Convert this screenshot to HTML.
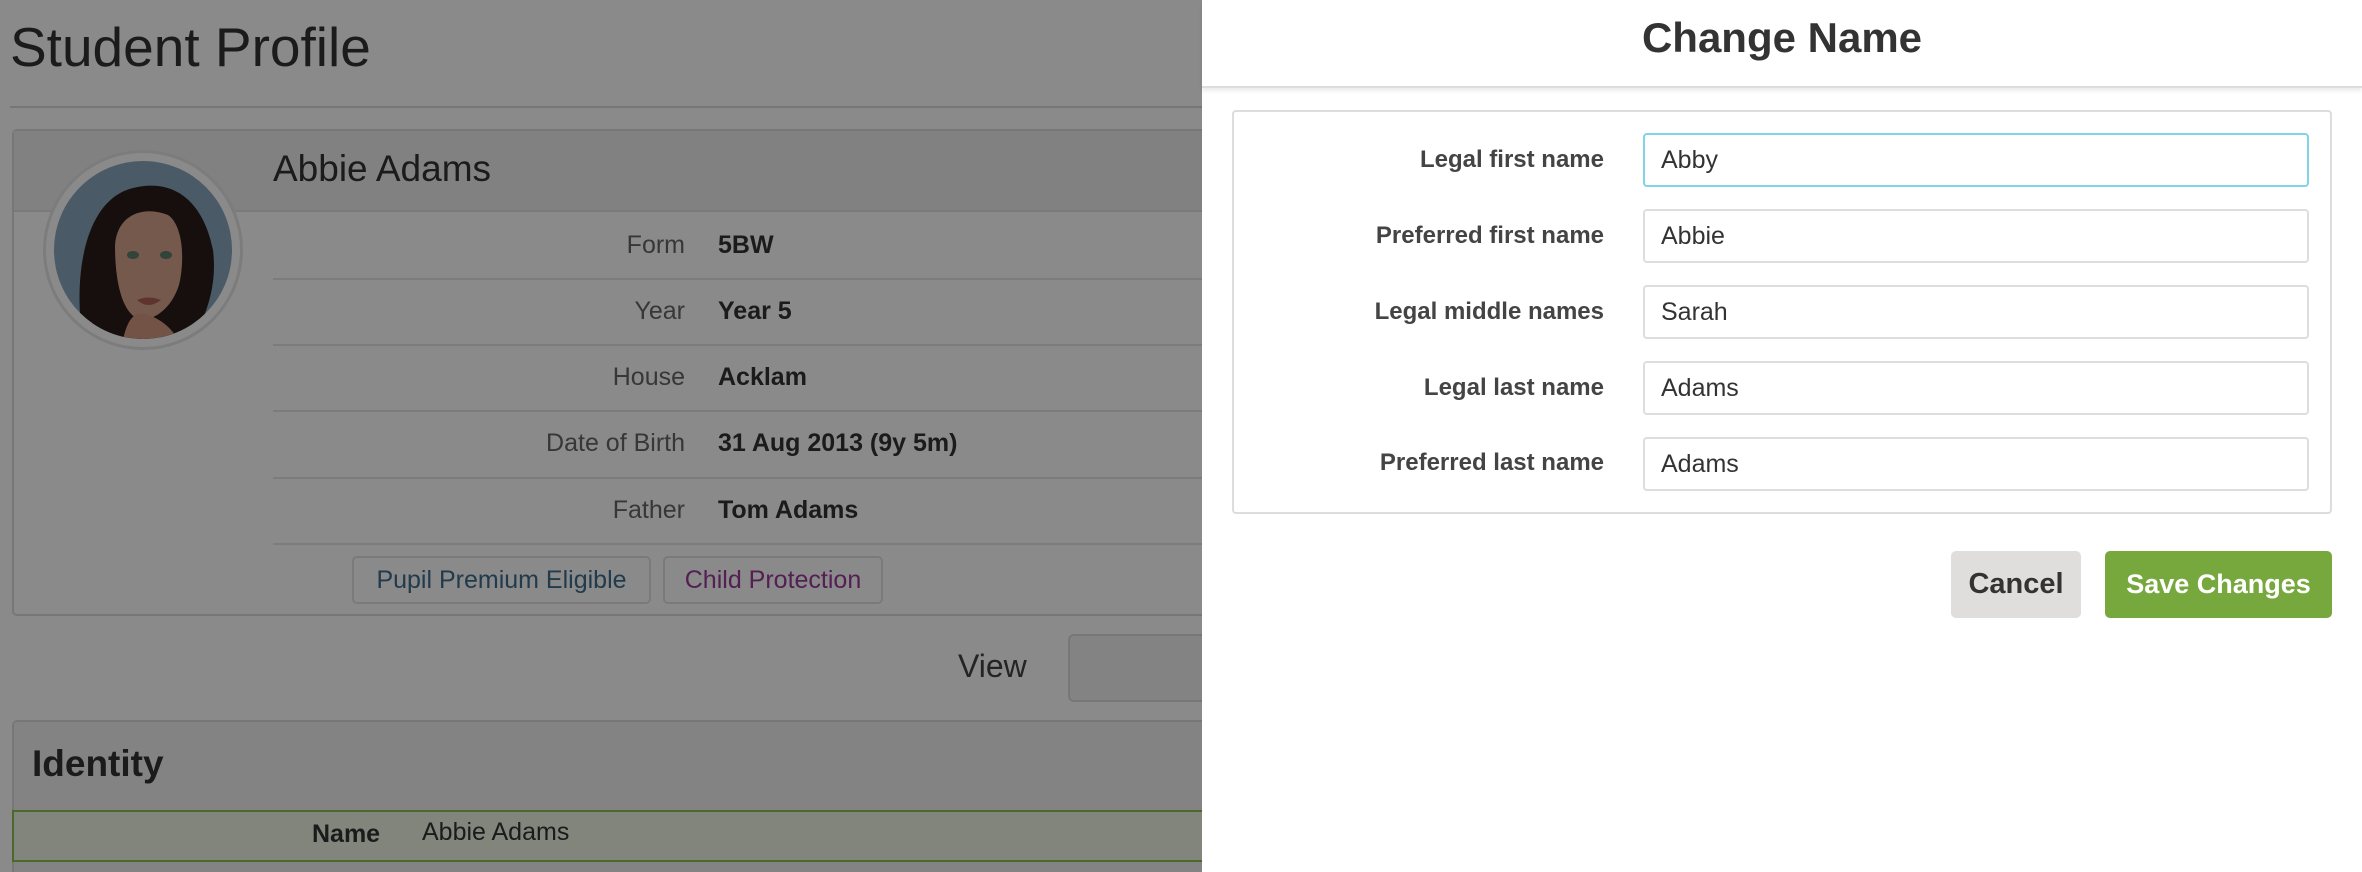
<!DOCTYPE html>
<html style="overflow:hidden"><head><meta charset="utf-8"><style>
*{box-sizing:border-box;margin:0;padding:0}
html,body{width:2362px;height:872px;overflow:hidden}
body{position:relative;background:#fff;font-family:"Liberation Sans",sans-serif;color:#333}
.a{position:absolute}
.lbl{position:absolute;right:1677px;font-size:25px;color:#666;text-align:right;white-space:nowrap}
.val{position:absolute;left:718px;font-size:25px;font-weight:bold;color:#333;white-space:nowrap}
.sep{position:absolute;left:273px;width:929px;height:2px;background:#e6e6e6}
.ov{position:absolute;left:0;top:0;width:1202px;height:872px;background:rgba(0,0,0,0.46)}
.fl{position:absolute;right:758px;font-size:24px;font-weight:bold;color:#444;text-align:right;white-space:nowrap}
.in{position:absolute;left:1643px;width:666px;height:54px;border:2px solid #ddd;border-radius:4px;font-size:25px;color:#333;padding-left:16px;line-height:50px}
</style></head><body>
<div class="a" style="left:10px;top:15px;font-size:55px;color:#333">Student Profile</div>
<div class="a" style="left:10px;top:106px;width:1192px;height:2px;background:#ddd"></div>
<div class="a" style="left:12px;top:129px;width:1190px;height:487px;border:2px solid #ddd;border-right:none;border-radius:5px 0 0 5px"></div>
<div class="a" style="left:14px;top:131px;width:1188px;height:81px;background:#eee;border-bottom:2px solid #e2e2e2"></div>
<div class="a" style="left:273px;top:148px;font-size:37px;color:#333">Abbie Adams</div>
<div class="a" style="left:43px;top:150px;width:200px;height:200px;border-radius:50%;background:#fff;border:3px solid #e6e6e6"></div>
<svg class="a" style="left:53px;top:160px" width="180" height="180" viewBox="0 0 180 180">
<defs><clipPath id="c"><circle cx="90" cy="90" r="89"/></clipPath></defs>
<g clip-path="url(#c)">
<rect width="180" height="180" fill="#8aa6bd"/>
<path d="M30 180 C20 120 30 40 80 28 C120 18 150 40 160 90 C165 130 150 160 140 180Z" fill="#2a1d18"/>
<path d="M62 85 C64 55 90 45 115 55 C130 65 132 100 126 125 C118 150 100 160 88 160 C72 156 62 130 62 85Z" fill="#d9a58c"/>
<path d="M70 180 C75 155 85 150 95 155 C110 160 120 170 125 180Z" fill="#d49a80"/>
<path d="M84 140 Q95 135 108 140 Q95 150 84 140Z" fill="#b0605a"/>
<ellipse cx="80" cy="95" rx="6" ry="4" fill="#5d7d6b"/><ellipse cx="113" cy="95" rx="6" ry="4" fill="#5d7d6b"/>
</g></svg>
<div class="lbl" style="top:231px">Form</div><div class="val" style="top:231px">5BW</div>
<div class="sep" style="top:278px"></div>
<div class="lbl" style="top:297px">Year</div><div class="val" style="top:297px">Year 5</div>
<div class="sep" style="top:344px"></div>
<div class="lbl" style="top:363px">House</div><div class="val" style="top:363px">Acklam</div>
<div class="sep" style="top:410px"></div>
<div class="lbl" style="top:429px">Date of Birth</div><div class="val" style="top:429px">31 Aug 2013 (9y 5m)</div>
<div class="sep" style="top:477px"></div>
<div class="lbl" style="top:496px">Father</div><div class="val" style="top:496px">Tom Adams</div>
<div class="sep" style="top:543px"></div>
<div class="a" style="left:352px;top:556px;width:299px;height:48px;border:2px solid #e2e2e2;border-radius:5px;font-size:25px;color:#3f6e8c;text-align:center;line-height:44px;white-space:nowrap">Pupil Premium Eligible</div>
<div class="a" style="left:663px;top:556px;width:220px;height:48px;border:2px solid #e2e2e2;border-radius:5px;font-size:25px;color:#9b3a9b;text-align:center;line-height:44px;white-space:nowrap">Child Protection</div>
<div class="a" style="left:958px;top:648px;font-size:32px;color:#444">View</div>
<div class="a" style="left:1068px;top:634px;width:134px;height:68px;border:2px solid #ddd;border-right:none;border-radius:6px 0 0 6px;background:#f3f3f3"></div>
<div class="a" style="left:12px;top:720px;width:1190px;height:152px;border:2px solid #ddd;border-right:none;border-bottom:none;border-radius:5px 0 0 0;background:#f3f3f3"></div>
<div class="a" style="left:32px;top:743px;font-size:37px;font-weight:bold;color:#333">Identity</div>
<div class="a" style="left:12px;top:810px;width:1190px;height:52px;border:2px solid #8bc34a;border-right:none;background:#f0f6e6"></div>
<div class="a" style="left:312px;top:820px;font-size:25px;font-weight:bold;color:#333">Name</div>
<div class="a" style="left:422px;top:818px;font-size:25px;color:#333">Abbie Adams</div>
<div class="ov"></div>
<div class="a" style="left:1202px;top:0;width:1160px;height:872px;background:#fff"></div>
<div class="a" style="left:1202px;top:0;width:1160px;height:88px;border-bottom:2px solid #ddd;box-shadow:0 3px 4px rgba(0,0,0,0.08);text-align:center;font-size:42px;font-weight:bold;color:#333;line-height:76px">Change Name</div>
<div class="a" style="left:1232px;top:110px;width:1100px;height:404px;border:2px solid #ddd;border-radius:4px"></div>
<div class="fl" style="top:146px">Legal first name</div>
<div class="in" style="top:133px;border-color:#7fd3ea">Abby</div>
<div class="fl" style="top:222px">Preferred first name</div>
<div class="in" style="top:209px">Abbie</div>
<div class="fl" style="top:298px">Legal middle names</div>
<div class="in" style="top:285px">Sarah</div>
<div class="fl" style="top:374px">Legal last name</div>
<div class="in" style="top:361px">Adams</div>
<div class="fl" style="top:449px">Preferred last name</div>
<div class="in" style="top:437px">Adams</div>
<div class="a" style="left:1951px;top:551px;width:130px;height:67px;background:#e0dddd;border-radius:5px;text-align:center;line-height:67px;font-size:29px;font-weight:bold;color:#333">Cancel</div>
<div class="a" style="left:2105px;top:551px;width:227px;height:67px;background:#77a83d;border-radius:5px;text-align:center;line-height:67px;font-size:27px;font-weight:bold;color:#fff;white-space:nowrap">Save Changes</div>
</body></html>
